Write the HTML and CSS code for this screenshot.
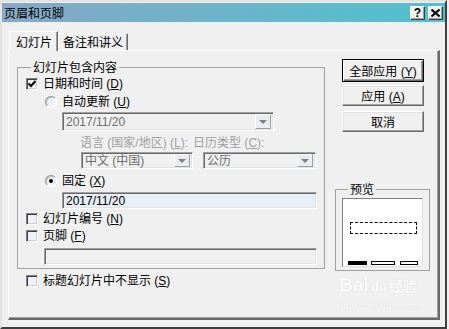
FILE: index.html
```html
<!DOCTYPE html>
<html lang="zh-CN">
<head>
  <meta charset="UTF-8">
  <title>页眉和页脚</title>
  <link rel="stylesheet" href="styles.css">
</head>
<body>
  <div class="window">
    <div class="titlebar">
      <span class="title">页眉和页脚</span>
      <div class="title-buttons">
        <span class="title-btn help">?</span>
        <span class="title-btn">
          <svg width="9" height="8" viewBox="0 0 9 8"><path d="M0.5 0.5 L8.5 7.5 M8.5 0.5 L0.5 7.5" stroke="#000" stroke-width="2"/></svg>
        </span>
      </div>
    </div>

    <div class="client">
      <div class="tabs">
        <div class="tab active">幻灯片</div>
        <div class="tab">备注和讲义</div>
      </div>

      <div class="panel">
        <div class="left-col">
          <fieldset class="group main-group">
            <legend>幻灯片包含内容</legend>

            <div class="row r-date">
              <span class="checkbox">
                <svg width="8" height="8" viewBox="0 0 8 8"><path d="M0.5 3.5 L3 6 L7.5 1" stroke="#000" stroke-width="2" fill="none"/></svg>
              </span>
              <span>日期和时间 (<u>D</u>)</span>
            </div>

            <div class="row indent r-auto">
              <span class="radio"></span>
              <span>自动更新 (<u>U</u>)</span>
            </div>

            <div class="combo combo-date disabled">
              <span class="combo-text">2017/11/20</span>
              <span class="combo-btn"></span>
            </div>

            <div class="row labels">
              <span class="lbl-lang">语言 (国家/地区) (<u>L</u>):</span>
              <span class="lbl-cal">日历类型 (<u>C</u>):</span>
            </div>

            <div class="combo-pair">
              <div class="combo combo-lang disabled">
                <span class="combo-text">中文 (中国)</span>
                <span class="combo-btn"></span>
              </div>
              <div class="combo combo-cal disabled">
                <span class="combo-text">公历</span>
                <span class="combo-btn"></span>
              </div>
            </div>

            <div class="row indent r-fixed">
              <span class="radio on"></span>
              <span>固定 (<u>X</u>)</span>
            </div>

            <div class="edit edit-fixed">2017/11/20</div>

            <div class="row r-num">
              <span class="checkbox"></span>
              <span>幻灯片编号 (<u>N</u>)</span>
            </div>

            <div class="row r-foot">
              <span class="checkbox"></span>
              <span>页脚 (<u>F</u>)</span>
            </div>

            <div class="edit edit-foot disabled"></div>
          </fieldset>

          <div class="row r-title">
            <span class="checkbox"></span>
            <span>标题幻灯片中不显示 (<u>S</u>)</span>
          </div>
        </div>

        <div class="right-col">
          <button class="btn default">全部应用 (<u>Y</u>)</button>
          <button class="btn">应用 (<u>A</u>)</button>
          <button class="btn">取消</button>

          <fieldset class="group preview-group">
            <legend>预览</legend>
            <div class="preview">
              <div class="dash-box"></div>
              <div class="bars">
                <span class="bar filled"></span>
                <span class="bar b2"></span>
                <span class="bar b3"></span>
              </div>
            </div>
          </fieldset>
        </div>
      </div>
    </div>

    <div class="watermark">
      <div class="wm-logo">Bai<span class="wm-du">du</span><span class="wm-cn">经验</span></div>
      <div class="wm-url">jingyan.baidu.com</div>
    </div>
  </div>
</body>
</html>
```

FILE: styles.css
```css
* {
  box-sizing: border-box;
}

body {
  margin: 0;
  background-color: #f0f0f0;
  font-family: "Liberation Sans", "Noto Sans CJK SC", sans-serif;
  font-size: 12px;
  color: #000;
}

u {
  text-decoration: underline;
}

.window {
  position: relative;
  width: 447px;
  height: 329px;
  padding-top: 1px;
  border: 2px solid;
  border-color: #e3e3e3 #404040 #404040 #e3e3e3;
  background-color: #f0f0f0;
  overflow: hidden;
}

/* title bar */
.titlebar {
  display: flex;
  align-items: center;
  justify-content: space-between;
  height: 19px;
  padding: 0 2px 0 2px;
  background: linear-gradient(to right, #87a8c6, #50c0cf);
}

.title {
  font-family: "Noto Sans CJK SC", sans-serif;
  font-size: 12px;
  line-height: 14px;
}

.title-buttons {
  display: flex;
  gap: 3px;
}

.title-btn {
  display: flex;
  align-items: center;
  justify-content: center;
  width: 15px;
  height: 14px;
  background-color: #f0f0f0;
  border: 1px solid;
  border-color: #fff #404040 #404040 #fff;
  box-shadow: inset -1px -1px #a0a0a0;
}

.title-btn.help {
  font-weight: bold;
  font-size: 12px;
  line-height: 12px;
}

/* tabs */
.client {
  padding: 9px 0 0 6px;
}

.tabs {
  display: flex;
  align-items: flex-end;
  padding-left: 1px;
}

.tab {
  height: 17px;
  padding: 0 4px 0 4px;
  line-height: 16px;
  font-family: "Noto Sans CJK SC", sans-serif;
  border: 1px solid;
  border-bottom: none;
  border-color: #fff #696969 transparent #fff;
  box-shadow: inset -1px 0 #a0a0a0;
  background-color: #f0f0f0;
}

.tab.active {
  position: relative;
  z-index: 1;
  height: 20px;
  margin-bottom: -1px;
  padding: 0 5px 0 6px;
  line-height: 19px;
}

.panel {
  display: flex;
  align-items: flex-start;
  width: 432px;
  height: 270px;
  padding: 8px 0 0 8px;
  border: 1px solid;
  border-right-width: 2px;
  border-bottom-width: 2px;
  border-color: #fff #696969 #696969 #fff;
  box-shadow: inset -1px -1px #a0a0a0;
}

/* group boxes */
.group {
  margin: 0;
  padding: 0;
  border: 1px solid #a0a0a0;
}

.group legend {
  padding: 0 2px;
  margin-left: 5px;
  line-height: 14px;
  font-family: "Noto Sans CJK SC", sans-serif;
}

.left-col {
  width: 308px;
}

.main-group {
  margin-top: 1px;
  padding: 3px 0 3px 8px;
}

.row {
  display: flex;
  align-items: center;
  height: 14px;
  line-height: 14px;
  white-space: nowrap;
}

.row > span:last-child {
  margin-left: 5px;
}

.indent {
  padding-left: 19px;
}

.r-date { margin-bottom: 4px; }
.r-auto { margin-bottom: 3px; }
.r-fixed { margin-bottom: 4px; }
.r-num { margin-bottom: 3px; }
.r-foot { margin-bottom: 5px; }
.r-title { margin: 5px 0 0 9px; }

.checkbox {
  display: flex;
  align-items: center;
  justify-content: center;
  width: 12px;
  height: 12px;
  flex: none;
  background-color: #edf2fa;
  border: 1px solid;
  border-color: #808080 #fff #fff #808080;
  box-shadow: inset 1px 1px #404040, inset -1px -1px #d4d0c8;
}

.radio {
  position: relative;
  width: 12px;
  height: 12px;
  flex: none;
  border-radius: 50%;
  background-color: #edf2fa;
  border: 1px solid;
  border-color: #909090 #fff #fff #909090;
  box-shadow: inset 1px 1px #c8c8c8;
}

.radio.on::after {
  content: "";
  position: absolute;
  left: 3px;
  top: 3px;
  width: 4px;
  height: 4px;
  border-radius: 50%;
  background-color: #000;
}

/* edits and combos */
.combo, .edit {
  display: flex;
  align-items: center;
  border: 1px solid;
  border-color: #a0a0a0 #fff #fff #a0a0a0;
  box-shadow: inset 1px 1px #696969, inset -1px -1px #e3e3e3;
  background-color: #f0f0f0;
  white-space: nowrap;
}

.combo-text {
  flex: 1;
  padding-left: 3px;
  line-height: 14px;
}

.disabled .combo-text {
  color: #6d6d6d;
}

.combo-btn {
  position: relative;
  align-self: stretch;
  width: 16px;
  margin: 1px 2px 1px 0;
  background-color: #e9edf3;
  border: 1px solid;
  border-color: #fff #a0a0a0 #a0a0a0 #fff;
}

.combo-btn::after {
  content: "";
  position: absolute;
  left: 3px;
  top: 50%;
  margin-top: -2px;
  border-left: 4px solid transparent;
  border-right: 4px solid transparent;
  border-top: 4px solid #808080;
}

.combo-date {
  width: 212px;
  height: 19px;
  margin: 0 0 5px 36px;
}

.labels {
  margin-bottom: 2px;
  padding-left: 54px;
  color: #a0a0a0;
}

.labels .lbl-cal {
  margin-left: 10px;
}

.combo-pair {
  display: flex;
  gap: 10px;
  margin: 0 0 5px 55px;
}

.combo-lang {
  width: 112px;
  height: 17px;
}

.combo-cal {
  width: 113px;
  height: 17px;
}

.edit {
  height: 17px;
  padding-left: 3px;
  line-height: 14px;
}

.edit-fixed {
  width: 255px;
  margin: 0 0 3px 36px;
  background-color: #e8eef8;
}

.edit-foot {
  width: 273px;
  margin-left: 18px;
}

/* right column */
.right-col {
  width: 95px;
  margin-left: 10px;
}

.btn {
  display: block;
  width: 82px;
  height: 21px;
  margin: 0 0 0 7px;
  padding: 0;
  font-family: "Liberation Sans", "Noto Sans CJK SC", sans-serif;
  font-size: 12px;
  color: #000;
  background-color: #f0f0f0;
  border: 1px solid;
  border-color: #fff #696969 #696969 #fff;
  box-shadow: inset -1px -1px #a0a0a0, inset 1px 1px #e3e3e3;
}

.btn.default {
  height: 23px;
  margin-bottom: 3px;
  border-color: #000;
  box-shadow: inset 1px 1px #fff, inset -1px -1px #696969, inset -2px -2px #a0a0a0;
}

.btn + .btn:not(.default) {
  margin-top: 0;
}

.btn:nth-of-type(2) {
  margin-bottom: 5px;
}

.preview-group {
  margin-top: 50px;
  padding: 2px 0 3px 6px;
}

.preview-group legend {
  margin-left: 6px;
}

.preview {
  width: 81px;
  height: 69px;
  padding: 23px 0 0 7px;
  background-color: #fff;
  border: 1px solid;
  border-color: #808080 #e0e0e0 #e0e0e0 #808080;
}

.dash-box {
  width: 67px;
  height: 12px;
  border: 1px dashed #000;
}

.bars {
  display: flex;
  margin: 27px 0 0 -2px;
}

.bar {
  height: 4px;
  border: 1px solid #000;
  background-color: #fff;
}

.bar.filled {
  width: 19px;
  background-color: #000;
}

.bar.b2 {
  width: 24px;
  margin-left: 4px;
}

.bar.b3 {
  width: 18px;
  margin-left: 5px;
}

/* watermark over the dialog */
.watermark {
  position: absolute;
  left: 331px;
  top: 272px;
  width: 90px;
  text-align: center;
  color: #fbfbfb;
  text-shadow: 0 0 1px #d0d0d0;
  pointer-events: none;
}

.wm-logo {
  font-family: "Liberation Sans", sans-serif;
  font-weight: bold;
  font-size: 19px;
  line-height: 22px;
}

.wm-du {
  font-size: 13px;
  margin: 0 2px;
}

.wm-cn {
  font-family: "Noto Sans CJK SC", sans-serif;
  font-size: 14px;
}

.wm-url {
  font-family: "Liberation Serif", serif;
  font-size: 11px;
  line-height: 14px;
}
```
